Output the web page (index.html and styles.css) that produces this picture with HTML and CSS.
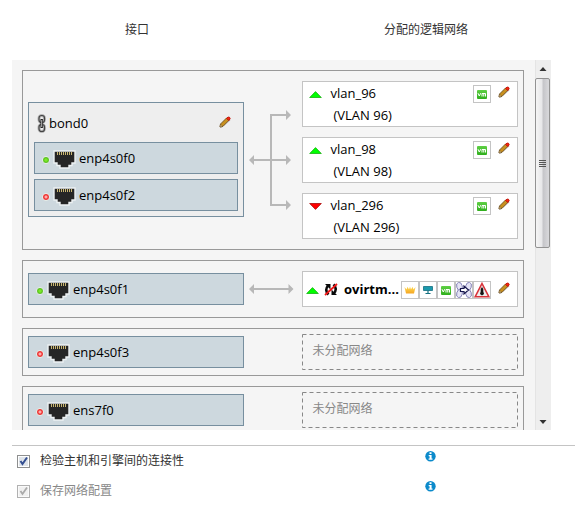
FILE: index.html
```html
<!DOCTYPE html>
<html lang="zh-CN">
<head>
<meta charset="utf-8">
<title>网络设置</title>
<link rel="stylesheet" href="styles.css">
</head>
<body>
<svg width="0" height="0" class="defs">
  <defs>
    <linearGradient id="gold" x1="0" y1="0" x2="0" y2="1"><stop offset="0" stop-color="#ffdc50"/><stop offset="1" stop-color="#f5a623"/></linearGradient>
    <linearGradient id="vmg" x1="0" y1="0" x2="0" y2="1"><stop offset="0" stop-color="#5fd045"/><stop offset="1" stop-color="#2fae1c"/></linearGradient>
    <symbol id="port" viewBox="0 0 23 19">
      <path d="M1 1H22V13H19V15.500H16V18H7V15.500H4V13H1Z" fill="#262626" stroke="#edf1f3" stroke-width="1.400"/>
      <path d="M4.500 2V5M6.500 2V5M8.500 2V5M10.500 2V5M12.500 2V5M14.500 2V5M16.500 2V5M18.500 2V5" stroke="#c9b670"/>
    </symbol>
    <symbol id="pencil" viewBox="0 0 12 12">
      <path d="M2 11.500L11 4" stroke="#bbb" stroke-width="1.500" opacity=".6"/>
      <path d="M1 11L1.500 8L7.500 2L10 4.300L4 10.300Z" fill="#c8901e" stroke="#64451a" stroke-width=".8"/>
      <path d="M1 11L1.500 8.300L3.800 10.400Z" fill="#f1d9a0" stroke="#573a10" stroke-width=".5"/>
      <path d="M7.500 2.500Q9 .2 10.500 1.300T10 4.500Z" fill="#f52a10" stroke="#c5150c" stroke-width="1"/>
    </symbol>
    <symbol id="vm" viewBox="0 0 10 9">
      <rect width="10" height="9" rx="1" fill="url(#vmg)"/>
      <path d="M1 3.200L2.300 6L3.700 3.200M5 6.500V3.500H8.500V6.500M6.750 3.500V6.500" fill="none" stroke="#fff" stroke-width="1"/>
    </symbol>
    <symbol id="up" viewBox="0 0 13 7"><path d="M.7 6.500L6.500 .6L12.300 6.500Z" fill="#0f0" stroke="#16b010" stroke-width=".8"/></symbol>
    <symbol id="down" viewBox="0 0 13 7"><path d="M.7 .5L6.500 6.400L12.300 .5Z" fill="#f00" stroke="#a90808" stroke-width=".8"/></symbol>
    <symbol id="info" viewBox="0 0 11 11"><circle cx="5.500" cy="5.200" r="5.200" fill="#0b8acb"/><path d="M4.500 1.300H6.500V3.100H4.500ZM3.700 4H6.600V7.500H7.500V8.700H3.600V7.500H4.600V5.200H3.700Z" fill="#fff"/></symbol>
  </defs>
</svg>

<header class="heads"><div>接口</div><div>分配的逻辑网络</div></header>

<main class="viewport">
  <div class="list">
    <section class="group">
      <div class="bond">
        <div class="bond-head">
          <svg class="chain" viewBox="0 0 11 19"><g fill="none"><rect x="3" y="1.500" width="5.500" height="7" rx="2.700" stroke="#b5b5b5" stroke-width="3"/><rect x="3" y="10.500" width="5.500" height="7" rx="2.700" stroke="#b5b5b5" stroke-width="3"/><rect x="3" y="1.500" width="5.500" height="7" rx="2.500" stroke="#444" stroke-width="1.200"/><rect x="3" y="10.500" width="5.500" height="7" rx="2.500" stroke="#444" stroke-width="1.200"/><path d="M5.700 5V14" stroke="#222" stroke-width="2.400"/><path d="M5.700 6V13" stroke="#ddd" stroke-width=".8"/></g></svg>
          <span>bond0</span>
          <svg class="pencil"><use href="#pencil"/></svg>
        </div>
        <div class="nic"><i class="led"></i><svg class="port"><use href="#port"/></svg><span>enp4s0f0</span></div>
        <div class="nic"><i class="led off"></i><svg class="port"><use href="#port"/></svg><span>enp4s0f2</span></div>
      </div>
      <svg class="wires tall" viewBox="0 0 58 158"><path d="M9 79H43M43 34H27V124H43" fill="none" stroke="#b8b8b8" stroke-width="2"/><path d="M5 79L10 74V84ZM47 79L42 74V84ZM47 34L42 29V39ZM47 124L42 119V129Z" fill="#b8b8b8"/></svg>
      <div class="nets">
        <div class="net"><svg class="state"><use href="#up"/></svg><div class="name">vlan_96<br><span>(VLAN 96)</span></div><b class="badge"><svg class="vm"><use href="#vm"/></svg></b><svg class="pencil"><use href="#pencil"/></svg></div>
        <div class="net"><svg class="state"><use href="#up"/></svg><div class="name">vlan_98<br><span>(VLAN 98)</span></div><b class="badge"><svg class="vm"><use href="#vm"/></svg></b><svg class="pencil"><use href="#pencil"/></svg></div>
        <div class="net"><svg class="state"><use href="#down"/></svg><div class="name">vlan_296<br><span>(VLAN 296)</span></div><b class="badge"><svg class="vm"><use href="#vm"/></svg></b><svg class="pencil"><use href="#pencil"/></svg></div>
      </div>
    </section>

    <section class="group">
      <div class="nic"><i class="led"></i><svg class="port"><use href="#port"/></svg><span>enp4s0f1</span></div>
      <svg class="wires" viewBox="0 0 58 36"><path d="M9 18H46" stroke="#b8b8b8" stroke-width="2"/><path d="M5 18L10 13V23ZM49.500 18L44.500 13V23Z" fill="#b8b8b8"/></svg>
      <div class="net single">
        <svg class="state"><use href="#up"/></svg>
        <svg class="sync" viewBox="0 0 14 13"><g fill="none" stroke="#0a0a0a" stroke-width="2.500"><path d="M4.500 11.500Q0 7 4.500 2M9.500 1.500Q14 6 9.500 11"/></g><path d="M1 1H6.500V6.500ZM13 12H7.500V6.500Z" fill="#0a0a0a"/><path d="M1 12L13 1" stroke="#f01818" stroke-width="1.800"/></svg>
        <strong>ovirtm...</strong>
        <div class="badges">
          <b class="badge"><svg viewBox="0 0 12 8" class="crown"><path d="M.5 1L2.500 3.500L3.500 .8L5 3.500L6 .5L7 3.500L8.500 .8L9.500 3.500L11.500 1L10 7.500H2Z" fill="url(#gold)"/></svg></b>
          <b class="badge"><svg viewBox="0 0 10 8" class="screen"><path d="M.5 .5H9.500V4.500H.5Z" fill="#1b9aad" stroke="#146f80" stroke-width=".8"/><path d="M5 4.500V7M2.500 7.500H7.500" stroke="#146f80" stroke-width="1.200"/></svg></b>
          <b class="badge"><svg class="vm"><use href="#vm"/></svg></b>
          <b class="badge"><svg viewBox="0 0 16 16" class="full"><g fill="#e5e4f5" stroke="#8583b8" stroke-width=".9"><ellipse cx="3.500" cy="4.500" rx="2.800" ry="4.200" transform="rotate(-15 3.500 4.500)"/><ellipse cx="12.500" cy="4.500" rx="2.800" ry="4.200" transform="rotate(15 12.500 4.500)"/><ellipse cx="3.500" cy="11.500" rx="2.800" ry="4.200" transform="rotate(15 3.500 11.500)"/><ellipse cx="12.500" cy="11.500" rx="2.800" ry="4.200" transform="rotate(-15 12.500 11.500)"/></g><path d="M4.500 6.500H8V4L12.500 8L8 12V9.500H4.500Z" fill="#fff" stroke="#16164d" stroke-width="1.200"/></svg></b>
          <b class="badge"><svg viewBox="0 0 16 16" class="full"><path d="M8 1.500L14.800 14.700H1.200Z" fill="#eee" stroke="#d8343b" stroke-width="1.600"/><path d="M8 5L9.300 7V9.500L10 12L8 13.500L6 12L6.700 9.500V7Z" fill="#151515"/></svg></b>
        </div>
        <svg class="pencil"><use href="#pencil"/></svg>
      </div>
    </section>

    <section class="group compact">
      <div class="nic"><i class="led off"></i><svg class="port"><use href="#port"/></svg><span>enp4s0f3</span></div>
      <div class="empty"><svg viewBox="0 0 216 36"><rect x=".5" y=".5" width="215" height="35"/></svg><span>未分配网络</span></div>
    </section>
    <section class="group compact">
      <div class="nic"><i class="led off"></i><svg class="port"><use href="#port"/></svg><span>ens7f0</span></div>
      <div class="empty"><svg viewBox="0 0 216 36"><rect x=".5" y=".5" width="215" height="35"/></svg><span>未分配网络</span></div>
    </section>
  </div>
  <div class="scrollbar">
    <svg class="arrow" viewBox="0 0 16 18"><path d="M4.500 11L8 7L11.500 11Z" fill="#333"/></svg>
    <div class="thumb"><i></i><i></i><i></i><i></i></div>
    <svg class="arrow last" viewBox="0 0 16 18"><path d="M4.500 8L8 12L11.500 8Z" fill="#333"/></svg>
  </div>
</main>

<footer class="options">
  <div class="option"><svg class="check" viewBox="0 0 13 13"><rect x=".5" y=".5" width="12" height="12" fill="#fff" stroke="#8e8f8f"/><rect x="2" y="2" width="9" height="9" fill="#dfe4ea"/><path d="M3.500 6L5.500 9L10 2.500" fill="none" stroke="#344f91" stroke-width="2"/></svg><span>检验主机和引擎间的连接性</span><svg class="info"><use href="#info"/></svg></div>
  <div class="option disabled"><svg class="check" viewBox="0 0 13 13"><rect x=".5" y=".5" width="12" height="12" fill="#fafafa" stroke="#b1b1b1"/><rect x="2" y="2" width="9" height="9" fill="#f0f0f0"/><path d="M3.500 6L5.500 9L10 2.500" fill="none" stroke="#aaa" stroke-width="1.800"/></svg><span>保存网络配置</span><svg class="info"><use href="#info"/></svg></div>
</footer>
</body>
</html>
```
FILE: styles.css
```css
* { box-sizing: border-box; }
body {
  margin: 0;
  width: 575px;
  height: 506px;
  overflow: hidden;
  background: #fff;
  color: #000;
  font: 13px/22px "Open Sans", "Noto Sans CJK SC", sans-serif;
}
svg { display: block; flex: none; }
.defs { position: absolute; }
.heads {
  display: grid;
  grid-template-columns: 250px 328px;
  padding: 19px 0 0 12px;
  height: 60px;
  color: #333;
  font-size: 12px;
  text-align: center;
}
.viewport {
  display: flex;
  width: 539px;
  height: 370px;
  margin-left: 12px;
  overflow: hidden;
  background: #f5f5f5;
}
.list {
  display: flex;
  flex-direction: column;
  gap: 10px;
  width: 523px;
  padding: 10px 11px 0 10px;
}
.group {
  display: flex;
  flex: none;
  align-items: center;
  width: 502px;
  padding: 10px 5px;
  border: 1px solid #999;
}
.group.compact { justify-content: space-between; padding: 5px; }
.bond {
  display: flex;
  flex-direction: column;
  gap: 5px;
  width: 216px;
  height: 115px;
  margin-bottom: 1px;
  padding: 0 5px;
  border: 1px solid #778f9f;
  background: #eee;
}
.bond-head {
  display: flex;
  align-items: center;
  height: 34px;
  padding: 7px 7px 0 2px;
}
.bond-head span { margin-top: -2px; }
.bond-head .pencil { margin: -3px 0 0 auto; }
.chain { width: 11px; height: 19px; margin-right: 2px; }
.nic {
  display: flex;
  flex: none;
  align-items: center;
  width: 216px;
  height: 32px;
  padding-left: 7px;
  border: 1px solid #778f9f;
  background: #cdd8de;
}
.bond .nic { width: 204px; }
.led {
  width: 8px;
  height: 8px;
  margin: 4px 3px 0 0;
  border: 1px solid #e8eee8;
  border-radius: 50%;
  background: radial-gradient(circle, #7be82a 25%, #3fac0c 75%);
}
.led.off { background: radial-gradient(circle, #ffb0b0 15%, #ed2424 55%); }
.port { width: 23px; height: 19px; margin: 3px 3px 0 0; }
.wires { width: 58px; height: 36px; }
.wires.tall { height: 158px; }
.nets { display: grid; gap: 10px; }
.net {
  display: flex;
  align-items: flex-start;
  width: 216px;
  height: 46px;
  padding: 0 7px 0 6px;
  border: 1px solid #c4c4c4;
  background: #fff;
}
.net .state { width: 13px; height: 7px; margin-top: 9px; }
.name { flex: 1; padding-left: 8.500px; }
.name span { padding-left: 3px; }
.net .badge { margin-top: 3px; }
.net .pencil { margin: 4px 0 0 7px; }
.badge {
  display: grid;
  place-items: center;
  width: 18px;
  height: 18px;
  border: 1px solid #c4c4c4;
}
.vm { width: 10px; height: 9px; margin-top: 1px; }
.pencil { width: 12px; height: 12px; }
.net.single { height: 36px; padding-left: 3px; align-items: center; }
.single .state { margin: 3px 5px 0 0; }
.sync { width: 14px; height: 13px; margin: 1px 6px 0 0; }
.single strong { width: 57px; font-size: 13px; white-space: nowrap; }
.badges { display: flex; }
.badges .badge { margin-top: 2px; }
.crown { width: 12px; height: 8px; }
.screen { width: 10px; height: 8px; }
.full { width: 16px; height: 16px; }
.single .pencil { margin: -2px 0 0 auto; }
.empty { display: grid; width: 216px; height: 36px; color: #888; font-size: 12px; }
.empty > * { grid-area: 1 / 1; }
.empty svg { width: 216px; height: 36px; }
.empty rect { fill: none; stroke: #888; stroke-dasharray: 4 3; }
.empty span { padding: 6px 0 0 10.500px; }
.scrollbar {
  display: flex;
  flex-direction: column;
  width: 16px;
  background: linear-gradient(90deg, #e4e4e4 1px, #eee 1px);
}
.arrow { width: 16px; height: 18px; }
.arrow.last { margin-top: auto; }
.thumb {
  display: flex;
  flex: none;
  flex-direction: column;
  align-items: center;
  justify-content: center;
  gap: 1px;
  width: 15px;
  height: 170px;
  border: 1px solid #929292;
  border-radius: 2px;
  background: linear-gradient(90deg, #f5f5f5, #e7e7e9 45%, #c5c5c9 55%, #d9d9dc);
}
.thumb i { width: 7px; height: 1px; background: #555; }
.options {
  margin: 15px 0 0 12px;
  border-top: 1px solid #c4c4c4;
}
.option {
  display: grid;
  grid-template-columns: 23px 385px 11px;
  align-items: center;
  height: 30px;
  padding-left: 5px;
  color: #333;
  font-size: 12px;
}
.check { width: 13px; height: 13px; }
.info { width: 11px; height: 11px; margin-top: -9px; }
.disabled { color: #888; }
```
